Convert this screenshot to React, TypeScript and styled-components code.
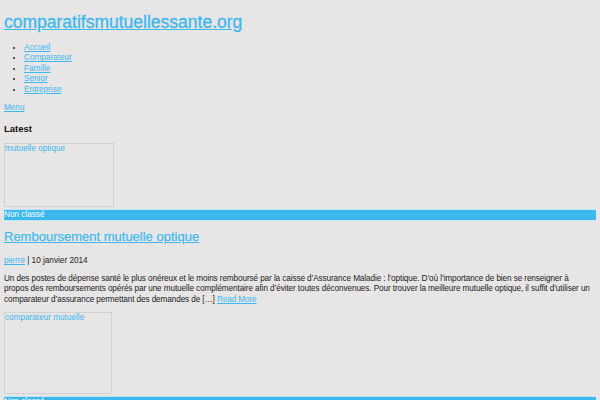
import * as React from "react";
import styled, { createGlobalStyle } from "styled-components";

const GlobalStyle = createGlobalStyle`
    html, body {
        margin: 0;
        padding: 0;
        background: #e7e5e6;
    }
    body {
        font-family: "Liberation Sans", Arial, sans-serif;
        font-size: 8.2px;
        line-height: 10.4px;
        color: #222;
    }
`;

const blue = "#3bb8ee";

const Page = styled.div`
    padding: 0 4px;
    overflow: hidden;
    height: 400px;
`;

const SiteTitle = styled.h1`
    margin: 12px 0 0 0;
    font-size: 17.5px;
    line-height: 20px;
    font-weight: normal;
    -webkit-text-stroke: 0.3px ${blue};
    a {
        color: ${blue};
    }
`;

const NavList = styled.ul`
    margin: 11px 0 0 0;
    padding-left: 20px;
    list-style: disc;
`;

const NavItem = styled.li`
    line-height: 10.4px;
`;

const Link = styled.a`
    color: ${blue};
    text-decoration: underline;
`;

const MenuToggle = styled.div`
    margin-top: 8px;
`;

const SectionTitle = styled.h3`
    margin: 10px 0 0 0;
    font-size: 9.5px;
    line-height: 12px;
    font-weight: bold;
    color: #111;
`;

const Thumb = styled.div<{ $h: number; $w: number; $gap: number }>`
    margin-top: ${p => p.$gap}px;
    width: ${p => p.$w}px;
    height: ${p => p.$h}px;
    box-sizing: border-box;
    border: 1px solid #d2d0d1;
    color: ${blue};
    line-height: 10px;
`;

const CategoryBar = styled.div`
    margin-top: 2px;
    background: ${blue};
    color: #fff;
    height: 10px;
    line-height: 10px;
    border-top: 1px solid #bfe6f7;
    border-bottom: 1px solid #bfe6f7;
`;

const PostTitle = styled.h2`
    margin: 8px 0 0 0;
    font-size: 13px;
    line-height: 16px;
    font-weight: normal;
    -webkit-text-stroke: 0.2px ${blue};
    a {
        color: ${blue};
    }
`;

const Meta = styled.div`
    margin-top: 11px;
`;

const Excerpt = styled.p`
    margin: 7px 0 0 0;
    line-height: 10.4px;
    letter-spacing: -0.1px;
    white-space: nowrap;
`;

const navItems = ["Accueil", "Comparateur", "Famille", "Senior", "Entreprise"];

export default function App() {
    return (
        <Page>
            <GlobalStyle />
            <SiteTitle>
                <a href="#">comparatifsmutuellessante.org</a>
            </SiteTitle>
            <NavList>
                {navItems.map(item => (
                    <NavItem key={item}>
                        <Link href="#">{item}</Link>
                    </NavItem>
                ))}
            </NavList>
            <MenuToggle>
                <Link href="#">Menu</Link>
            </MenuToggle>
            <SectionTitle>Latest</SectionTitle>
            <Thumb $w={110} $h={64} $gap={8}>mutuelle optique</Thumb>
            <CategoryBar>Non classé</CategoryBar>
            <PostTitle>
                <a href="#">Remboursement mutuelle optique</a>
            </PostTitle>
            <Meta>
                <Link href="#">pierre</Link> | 10 janvier 2014
            </Meta>
            <Excerpt>
                Un des postes de dépense santé le plus onéreux et le moins remboursé par la caisse d’Assurance Maladie : l’optique. D’où l’importance de bien se renseigner à
                <br />
                propos des remboursements opérés par une mutuelle complémentaire afin d’éviter toutes déconvenues. Pour trouver la meilleure mutuelle optique, il suffit d’utiliser un
                <br />
                comparateur d’assurance permettant des demandes de […] <Link href="#">Read More</Link>
            </Excerpt>
            <Thumb $w={108} $h={82} $gap={7}>comparateur mutuelle</Thumb>
            <CategoryBar>Non classé</CategoryBar>
        </Page>
    );
}
